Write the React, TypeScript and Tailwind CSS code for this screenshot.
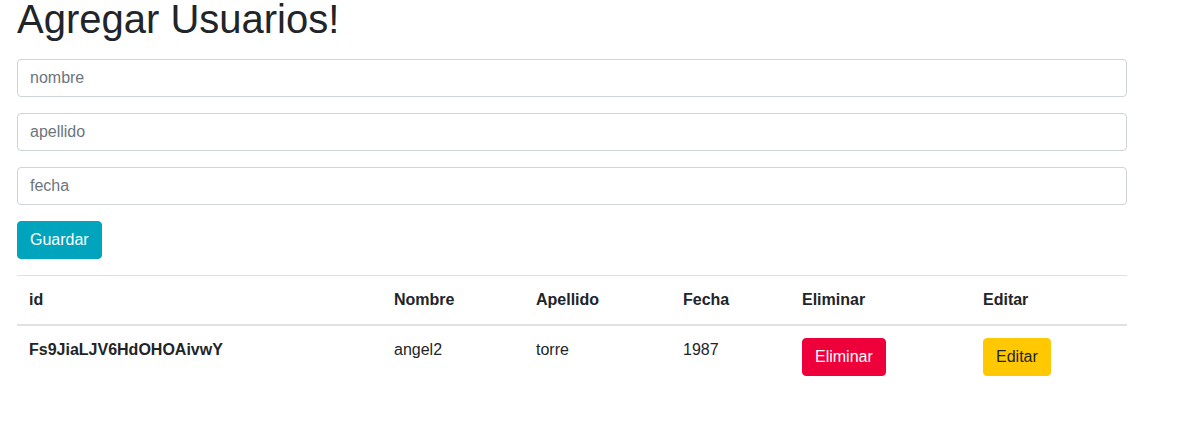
import React from "react";

export default function App() {
  const font = { fontFamily: '"Liberation Sans", Arial, sans-serif' };
  return (
    <div className="min-h-[433px] bg-white text-[#212529] text-[16px] leading-[1.5]" style={font}>
      <div className="pl-[17px] w-[1127px]">
        <h1 className="-mt-[5px] mb-4 text-[40px] leading-[1.2] font-medium">Agregar Usuarios!</h1>
        <form className="flex flex-col" onSubmit={(e) => e.preventDefault()}>
          <input
            className="mb-4 h-[38px] w-full rounded-[4px] border border-[#ced4da] px-3 py-[6px] text-[16px] text-[#495057] placeholder:text-[#6c757d] outline-none"
            placeholder="nombre"
          />
          <input
            className="mb-4 h-[38px] w-full rounded-[4px] border border-[#ced4da] px-3 py-[6px] text-[16px] text-[#495057] placeholder:text-[#6c757d] outline-none"
            placeholder="apellido"
          />
          <input
            className="mb-4 h-[38px] w-full rounded-[4px] border border-[#ced4da] px-3 py-[6px] text-[16px] text-[#495057] placeholder:text-[#6c757d] outline-none"
            placeholder="fecha"
          />
          <div className="mb-4">
            <button
              type="submit"
              className="h-[38px] rounded-[4px] border border-[#00a4bd] bg-[#00a4bd] px-3 text-[16px] leading-[1.5] text-white"
            >
              Guardar
            </button>
          </div>
        </form>
        <table className="w-[1110px] table-fixed border-separate border-spacing-0 text-left">
          <colgroup>
            <col className="w-[365px]" />
            <col className="w-[142px]" />
            <col className="w-[147px]" />
            <col className="w-[119px]" />
            <col className="w-[181px]" />
            <col className="w-[156px]" />
          </colgroup>
          <thead>
            <tr>
              {["id", "Nombre", "Apellido", "Fecha", "Eliminar", "Editar"].map((h) => (
                <th
                  key={h}
                  className="border-t border-b-2 border-[#dee2e6] p-3 align-bottom font-bold leading-[1.5]"
                >
                  {h}
                </th>
              ))}
            </tr>
          </thead>
          <tbody>
            <tr>
              <th className="p-3 align-top font-bold">Fs9JiaLJV6HdOHOAivwY</th>
              <td className="p-3 align-top">angel2</td>
              <td className="p-3 align-top">torre</td>
              <td className="p-3 align-top">1987</td>
              <td className="p-3 align-top">
                <button className="h-[38px] rounded-[4px] border border-[#ee003b] bg-[#ee003b] px-3 text-[16px] leading-[1.5] text-white">
                  Eliminar
                </button>
              </td>
              <td className="p-3 align-top">
                <button className="h-[38px] rounded-[4px] border border-[#ffc800] bg-[#ffc800] px-3 text-[16px] leading-[1.5] text-[#212529]">
                  Editar
                </button>
              </td>
            </tr>
          </tbody>
        </table>
      </div>
    </div>
  );
}
